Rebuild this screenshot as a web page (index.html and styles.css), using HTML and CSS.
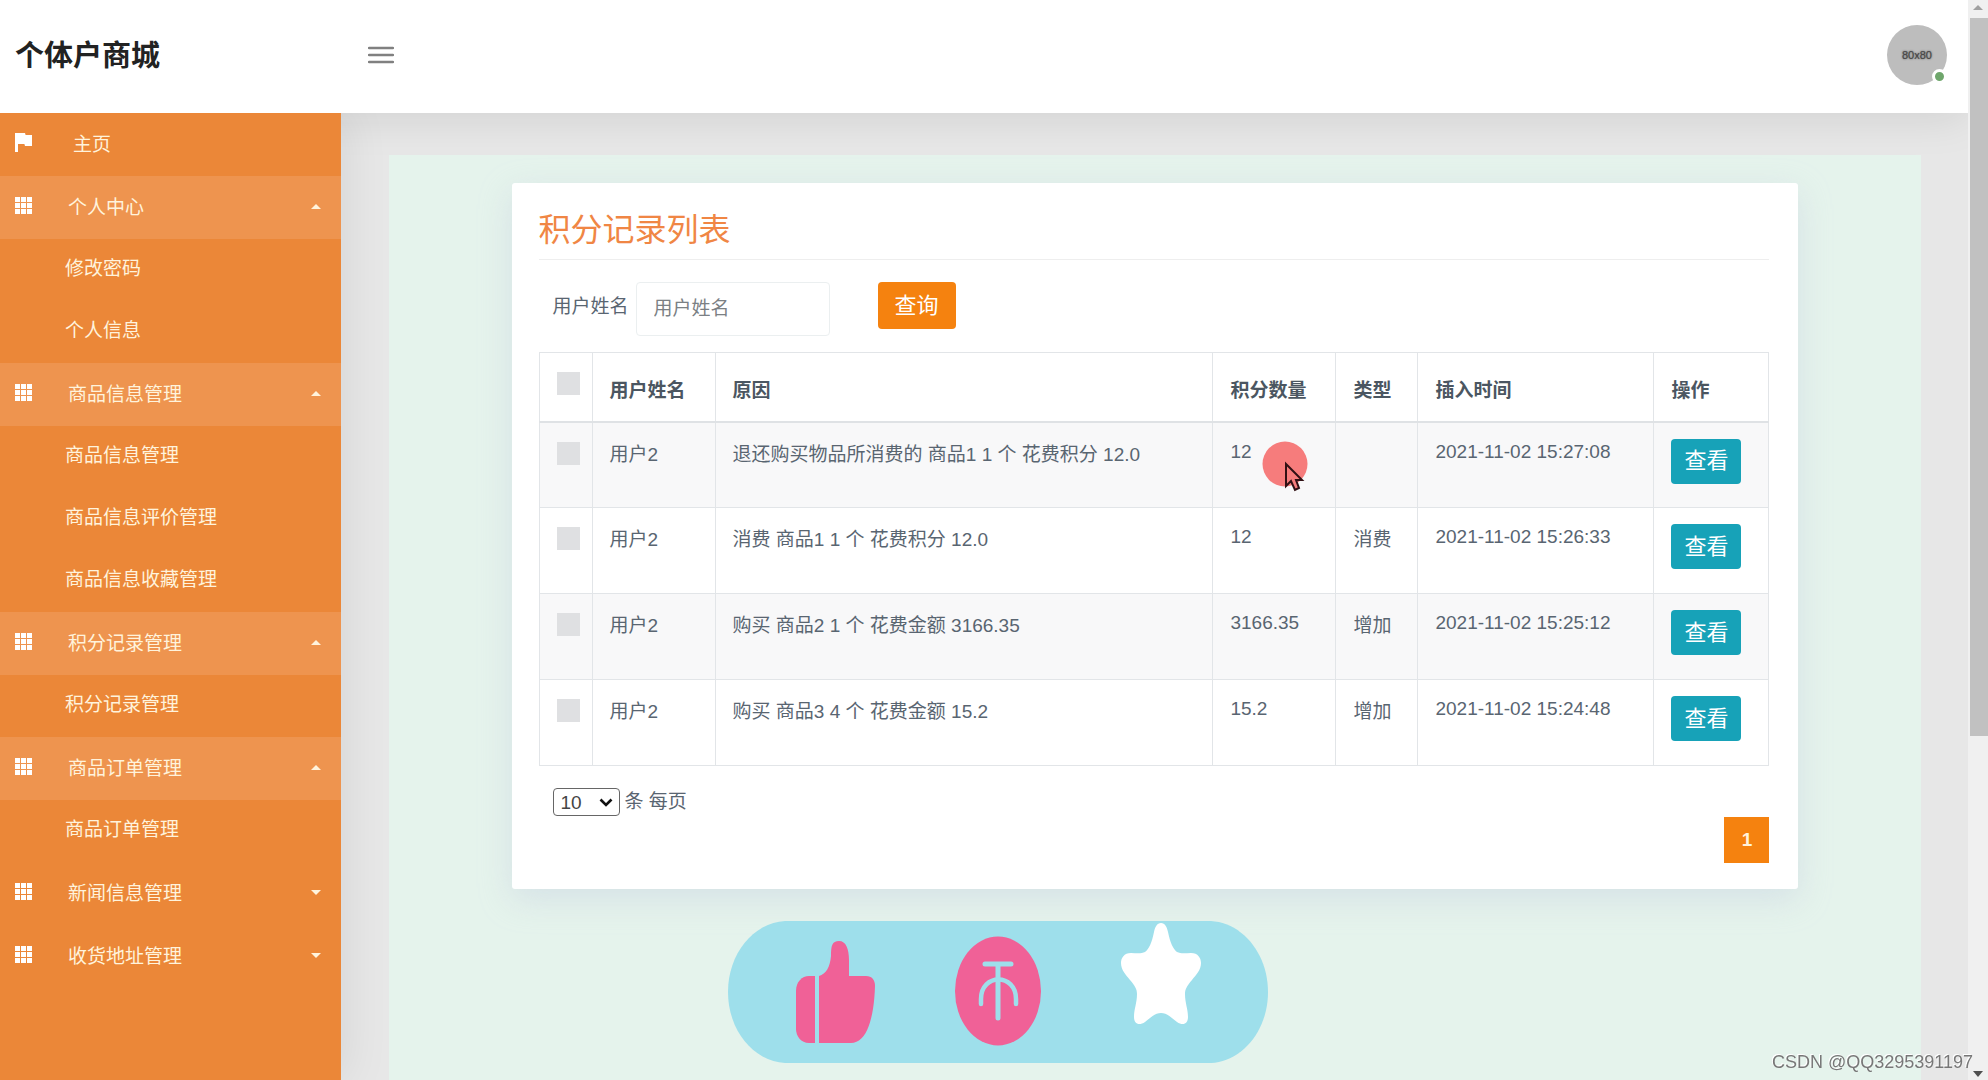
FILE: index.html
```html
<!DOCTYPE html>
<html lang="zh-CN">
<head>
<meta charset="utf-8">
<title>个体户商城</title>
<link rel="stylesheet" href="styles.css">
</head>
<body>
<svg class="defs" aria-hidden="true">
  <symbol id="grid" viewBox="0 0 17 17"><path fill="currentColor" d="M0 0h5v5H0zM6 0h5v5H6zM12 0h5v5h-5zM0 6h5v5H0zM6 6h5v5H6zM12 6h5v5h-5zM0 12h5v5H0zM6 12h5v5H6zM12 12h5v5h-5z"/></symbol>
</svg>
<div class="app">
  <header class="topbar">
    <a class="brand" href="#">个体户商城</a>
    <button class="menu-toggle" type="button" aria-label="菜单"><svg width="26" height="18" viewBox="0 0 26 18"><path d="M1 2h24M1 9h24M1 16h24" stroke="#808080" stroke-width="2.4" stroke-linecap="round"/></svg></button>
    <div class="avatar">80x80<span class="online"></span></div>
  </header>
  <div class="body">
    <nav class="sidebar">
      <a class="item home" href="#"><svg width="17" height="19" viewBox="0 0 17 19"><path fill="currentColor" d="M0 0h10l.6 2H17v11h-7l-.6-2H3v8H0z"/></svg><span>主页</span></a>
      <a class="item open" href="#"><svg width="17" height="17"><use href="#grid"/></svg><span>个人中心</span></a>
      <a class="sub" href="#">修改密码</a>
      <a class="sub" href="#">个人信息</a>
      <a class="item open" href="#"><svg width="17" height="17"><use href="#grid"/></svg><span>商品信息管理</span></a>
      <a class="sub" href="#">商品信息管理</a>
      <a class="sub" href="#">商品信息评价管理</a>
      <a class="sub" href="#">商品信息收藏管理</a>
      <a class="item open" href="#"><svg width="17" height="17"><use href="#grid"/></svg><span>积分记录管理</span></a>
      <a class="sub" href="#">积分记录管理</a>
      <a class="item open" href="#"><svg width="17" height="17"><use href="#grid"/></svg><span>商品订单管理</span></a>
      <a class="sub" href="#">商品订单管理</a>
      <a class="item closed" href="#"><svg width="17" height="17"><use href="#grid"/></svg><span>新闻信息管理</span></a>
      <a class="item closed" href="#"><svg width="17" height="17"><use href="#grid"/></svg><span>收货地址管理</span></a>
    </nav>
    <main class="content">
      <div class="panel">
        <section class="card">
          <h1>积分记录列表</h1>
          <form class="search">
            <label for="name">用户姓名</label>
            <input id="name" type="text" placeholder="用户姓名">
            <button type="button">查询</button>
          </form>
          <table>
            <colgroup><col class="c-check"><col class="c-user"><col><col class="c-num"><col class="c-type"><col class="c-time"><col class="c-op"></colgroup>
            <thead>
              <tr><th><input type="checkbox" aria-label="全选"></th><th>用户姓名</th><th>原因</th><th>积分数量</th><th>类型</th><th>插入时间</th><th>操作</th></tr>
            </thead>
            <tbody>
              <tr><td><input type="checkbox" aria-label="选择"></td><td>用户2</td><td>退还购买物品所消费的 商品1 1 个 花费积分 12.0</td><td class="latin">12</td><td></td><td class="latin">2021-11-02 15:27:08</td><td class="op"><button type="button">查看</button></td></tr>
              <tr><td><input type="checkbox" aria-label="选择"></td><td>用户2</td><td>消费 商品1 1 个 花费积分 12.0</td><td class="latin">12</td><td>消费</td><td class="latin">2021-11-02 15:26:33</td><td class="op"><button type="button">查看</button></td></tr>
              <tr><td><input type="checkbox" aria-label="选择"></td><td>用户2</td><td>购买 商品2 1 个 花费金额 3166.35</td><td class="latin">3166.35</td><td>增加</td><td class="latin">2021-11-02 15:25:12</td><td class="op"><button type="button">查看</button></td></tr>
              <tr><td><input type="checkbox" aria-label="选择"></td><td>用户2</td><td>购买 商品3 4 个 花费金额 15.2</td><td class="latin">15.2</td><td>增加</td><td class="latin">2021-11-02 15:24:48</td><td class="op"><button type="button">查看</button></td></tr>
            </tbody>
          </table>
          <div class="page-size">
            <span class="select"><select id="size"><option>10</option></select><svg width="14" height="9" viewBox="0 0 14 9"><path d="M1.500 1.500L7 7l5.500-5.500" fill="none" stroke="#111" stroke-width="2.600"/></svg></span>
            <label for="size">条 每页</label>
          </div>
          <div class="pager"><a href="#">1</a></div>
        </section>
      </div>
    </main>
  </div>
</div>
<div class="scrollbar" aria-hidden="true"><i class="up"></i><i class="thumb"></i><i class="down"></i></div>
<svg class="pointer" width="46" height="56" viewBox="0 0 46 56" aria-hidden="true"><circle cx="23" cy="26" r="22.500" fill="#f67c7c"/><path d="M24 26v22l5-5 4 9 4-2-3-8h6z" fill="#f67c7c" stroke="#301014" stroke-width="2"/></svg>
<svg class="reactions" width="540" height="142" viewBox="0 0 540 142" aria-hidden="true">
  <path fill="#9edfeb" d="M57 0H483C515 2 540 33 540 71S515 140 483 142H57C25 140 0 109 0 71S25 2 57 0z"/>
  <g fill="#f06197">
    <path d="M87 55v67H81c-8 0-13-7-13-14V70c0-9 6-15 13-15z"/>
    <path d="M91 55c7-2 11-9 12-20 0-10 1-15 8-15s10 8 10 19v16h17c6 0 9 4 9 10-1 32-8 57-24 57H91z"/>
    <ellipse cx="270" cy="70" rx="43" ry="54.500"/>
  </g>
  <path d="M257 43h26M270 43v54" fill="none" stroke="#9edfeb" stroke-width="5" stroke-linecap="round"/>
  <path d="M253 83V78c0-26 35-26 35 0v5" fill="none" stroke="#9edfeb" stroke-width="4.500" stroke-linecap="round"/>
  <path fill="#fff" d="M433 2c4 0 6 4 7 9 2 10 5 17 9 20 4 2 9 1 14 1 7 0 10 5 10 10 0 7-5 12-9 17-5 6-7 9-7 14 0 9 3 15 3 23 0 7-5 9-11 5-5-4-10-9-16-9s-11 5-16 9c-6 4-11 2-11-5 0-8 3-14 3-23 0-5-2-8-7-14-4-5-9-10-9-17 0-5 3-10 10-10 5 0 10 1 14-1 4-3 7-10 9-20 1-5 3-9 7-9z"/>
</svg>
<div class="watermark">CSDN @QQ3295391197</div>
</body>
</html>
```
FILE: styles.css
```css
* { box-sizing: border-box; }
html, body { height: 100%; }
body {
  margin: 0;
  overflow: hidden;
  font: 19px/28px "Liberation Sans", "Noto Sans CJK SC", sans-serif;
  color: #596571;
  background: #e7e7e7;
}
a { color: inherit; text-decoration: none; }
button, input, select { font: inherit; }
.defs { position: absolute; width: 0; height: 0; }
.app { display: flex; flex-direction: column; min-height: 100%; padding-right: 20px; }

.topbar {
  display: flex;
  align-items: center;
  height: 113px;
  padding: 0 21px 4px 15px;
  background: #fff;
  box-shadow: 0 4px 44px rgba(0, 0, 0, .1);
  position: relative;
}
.brand { width: 353px; padding-top: 2px; font-size: 29px; line-height: 40px; font-weight: 700; color: #222; }
.menu-toggle { display: flex; padding: 0; border: 0; background: none; }
.avatar {
  position: relative;
  width: 60px;
  height: 60px;
  margin-left: auto;
  border-radius: 50%;
  background: #bdbdbd;
  font-size: 11px;
  line-height: 60px;
  text-align: center;
  color: #444;
  text-shadow: 0 0 2px #444;
}
.online {
  position: absolute;
  right: 0;
  bottom: 1px;
  width: 15px;
  height: 15px;
  border: 3px solid #fff;
  border-radius: 50%;
  background: #6fa66c;
}

.body { display: flex; flex: 1; }
.sidebar {
  display: flex;
  flex-direction: column;
  flex: none;
  width: 341px;
  background: #eb8738;
  color: #fff3dc;
  box-shadow: 4px 0 44px rgba(0, 0, 0, .08);
  clip-path: inset(0 -60px 0 0);
  position: relative;
}
.item {
  display: flex;
  align-items: center;
  height: 63px;
  padding: 0 20px 0 15px;
  gap: 36px;
}
.item svg { color: #fff; margin-bottom: 5px; }
.home { gap: 41px; }
.open { background: #ee944f; }
.open::after, .closed::after {
  content: "";
  margin-left: auto;
  margin-bottom: 3px;
  border: 5px solid transparent;
}
.open::after { border-width: 0 5px 5px; border-bottom-color: #fff3dc; }
.closed::after { border-width: 5px 5px 0; border-top-color: #fff3dc; }
.sub { height: 62px; padding: 16px 0 0 65px; }

.content { flex: 1; padding: 42px 47px 0 48px; }
.panel { min-height: 100%; padding: 28px 8%; background: #e5f3ec; }
.card {
  padding: 27px 29px 26px 27px;
  border-radius: 3px;
  background: #fff;
  box-shadow: 0 10px 32px rgba(190, 200, 222, .4);
}
h1 {
  margin: 0 0 22px;
  padding-bottom: 8px;
  border-bottom: 1px solid #eee;
  font-size: 32px;
  line-height: 41px;
  font-weight: 400;
  color: #f08644;
}
.search { display: flex; align-items: flex-start; margin: 0 0 16px 14px; }
.search label { margin: 11px 7px 0 0; }
.search input {
  width: 194px;
  height: 54px;
  padding: 0 17px;
  border: 1px solid #ebeff0;
  border-radius: 4px;
  background: #fff;
}
.search input::placeholder { color: #7b8084; }
.search button, td button {
  border: 0;
  border-radius: 4px;
  color: #fff;
  font-size: 22px;
}
.search button { width: 78px; height: 47px; margin-left: 48px; padding: 0; background: #f5820f; }

table { width: 100%; table-layout: fixed; border-collapse: collapse; }
.c-check { width: 53px; }
.c-user { width: 123px; }
.c-num { width: 123px; }
.c-type { width: 82px; }
.c-time { width: 236px; }
.c-op { width: 115px; }
th, td { border: 1px solid #e2e5e8; padding: 18px 17px 0; text-align: left; vertical-align: top; white-space: nowrap; }
th { height: 69px; padding-top: 24px; color: #4b5661; font-weight: 700; border-bottom: 2px solid #dfe2e5; }
td { height: 86px; }
td.latin { padding-top: 15px; }
td.op { padding-top: 16px; }
tbody tr:nth-child(odd) { background: #f8f8f9; }
th:first-child, td:first-child { padding-top: 19px; }
th input, td input {
  display: block;
  appearance: none;
  width: 23px;
  height: 23px;
  margin: 0;
  background: #dfe0e2;
}
td button { width: 70px; height: 45px; padding: 0; background: #17a2b8; }

.page-size { display: flex; align-items: center; gap: 5px; margin: 22px 0 0 14px; }
.select { position: relative; display: flex; }
.select svg { position: absolute; right: 7px; top: 10px; pointer-events: none; }
select {
  appearance: none;
  width: 67px;
  height: 28px;
  padding: 0 7px;
  border: 1px solid #666;
  border-radius: 4px;
  background: #fff;
  color: #444;
}
.pager { display: flex; justify-content: flex-end; margin-top: 1px; }
.pager a { width: 45px; height: 46px; background: #f5820f; color: #fff3dc; font-weight: 700; line-height: 46px; text-align: center; }

.scrollbar {
  position: fixed;
  inset: 0 0 0 auto;
  display: flex;
  flex-direction: column;
  align-items: center;
  width: 20px;
  padding: 5px 0 3px;
  background: #f0f0f0;
}
.up, .down { border: 5px solid transparent; }
.up { border-width: 0 5px 5px; border-bottom-color: #a0a0a0; }
.thumb { align-self: flex-end; width: 18px; height: 67%; margin-top: 8px; background: #c1c1c1; }
.down { margin-top: auto; border-width: 6px 5px 0; border-top-color: #505050; }
.pointer { position: absolute; left: 1262px; top: 438px; }
.reactions { position: fixed; left: 728px; bottom: 17px; }
.watermark { position: fixed; right: 15px; bottom: 4px; font-size: 18px; color: #777; text-shadow: -1px -1px #fff; }
```
